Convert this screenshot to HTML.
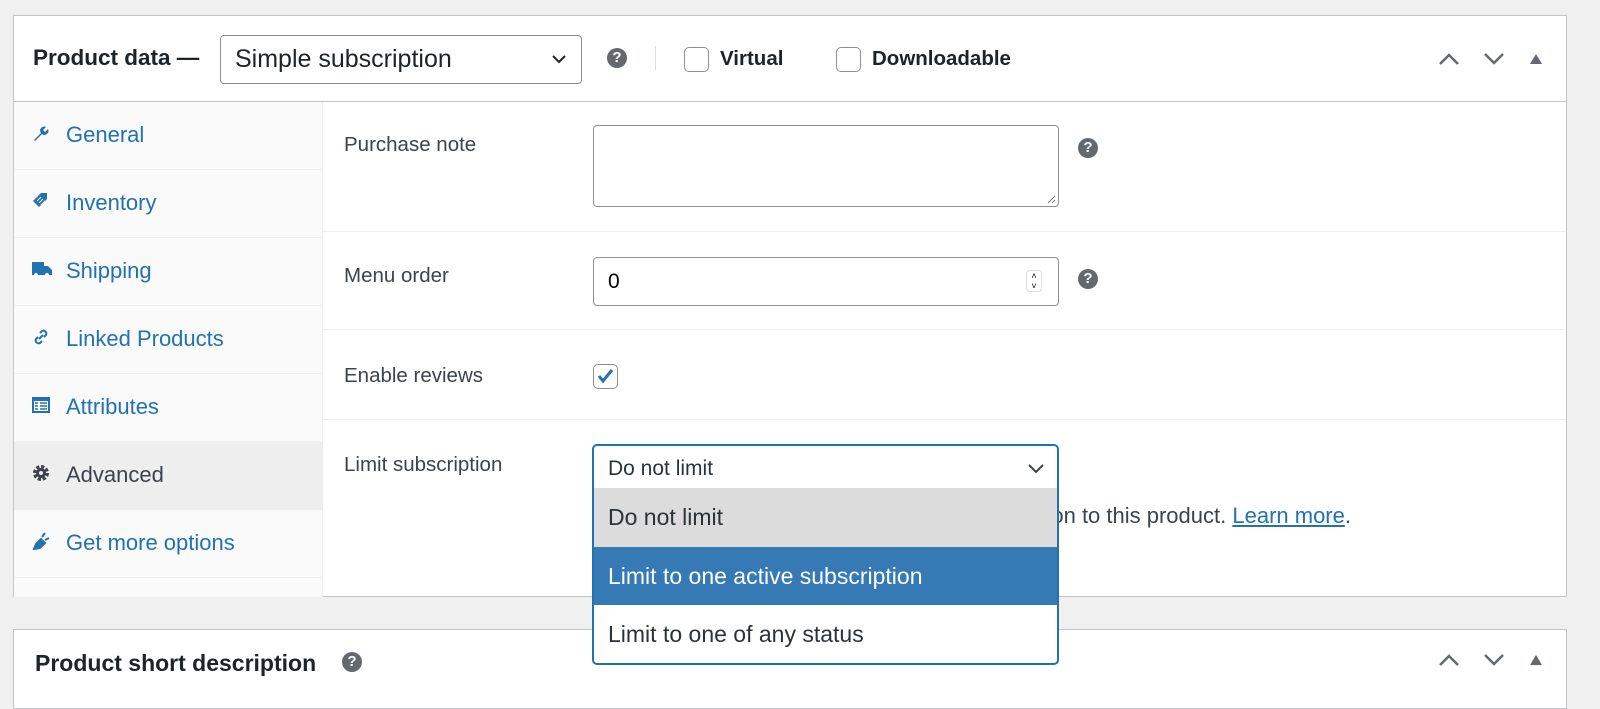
<!DOCTYPE html>
<html><head><meta charset="utf-8"><style>
*{box-sizing:border-box;margin:0;padding:0}
body{width:1600px;height:700px;background:#f0f0f1;font-family:"Liberation Sans",sans-serif;position:relative;overflow:hidden}
.a{position:absolute}
.panel{position:absolute;left:13px;width:1554px;background:#fff;border:1px solid #c3c4c7}
.tab{position:absolute;left:0;width:308px;height:68px;border-bottom:1px solid #eee;color:#2271b1;font-size:22px}
.tab span{position:absolute;left:52px;top:20px}
.tab svg{position:absolute;left:18px;top:22px}
.lbl{position:absolute;left:330px;font-size:20.5px;color:#3c434a}
.row{position:absolute;left:309px;right:0;border-bottom:1px solid #eee}
.help{position:absolute;width:20px;height:20px;border-radius:50%;background:#646970;color:#fff;font-size:15px;font-weight:bold;text-align:center;line-height:20px}
.cb{position:absolute;width:25px;height:25px;border:1.5px solid #8c8f94;border-radius:5px;background:#fff}
</style></head><body>
<div class="panel" style="top:15px;height:582px">
  <div class="a" style="left:0;right:0;top:0;height:86px;border-bottom:1px solid #c3c4c7"></div>
  <div class="a" style="left:19px;top:29px;font-size:22.5px;font-weight:bold;color:#1d2327">Product data —</div>
  <div class="a" style="left:206px;top:19px;width:362px;height:49px;border:1.5px solid #8c8f94;border-radius:4px;font-size:25px;color:#1d2327;padding:9px 0 0 14px">Simple subscription
    <svg class="a" style="right:14px;top:17px" width="16" height="12" viewBox="0 0 16 12"><path d="M2 3l6 6 6-6" fill="none" stroke="#1d2327" stroke-width="2"/></svg></div>
  <div class="help" style="left:593px;top:32px">?</div>
  <div class="a" style="left:641px;top:30px;width:1px;height:24px;background:#dcdcde"></div>
  <div class="cb" style="left:670px;top:31px"></div>
  <div class="a" style="left:706px;top:31px;font-size:20.5px;font-weight:bold;color:#1d2327">Virtual</div>
  <div class="cb" style="left:822px;top:31px"></div>
  <div class="a" style="left:858px;top:31px;font-size:20.5px;font-weight:bold;color:#1d2327">Downloadable</div>
  <svg class="a" style="left:1423px;top:35px" width="24" height="16" viewBox="0 0 24 16"><path d="M3 13l9-9 9 9" fill="none" stroke="#646970" stroke-width="2.5"/></svg>
  <svg class="a" style="left:1468px;top:35px" width="24" height="16" viewBox="0 0 24 16"><path d="M3 3l9 9 9-9" fill="none" stroke="#646970" stroke-width="2.5"/></svg>
  <svg class="a" style="left:1515px;top:37px" width="14" height="12" viewBox="0 0 14 12"><path d="M1 11L7 1l6 10z" fill="#646970"/></svg>

  <div class="a" style="left:0;top:86px;width:309px;height:495px;background:#fafafa;border-right:1px solid #eee"></div>
  <div class="tab" style="top:86px"><svg width="18" height="18" viewBox="0 0 18 18"><path d="M2 16l7-7a4 4 0 0 1 5-6l-3 3 2 2 3-3a4 4 0 0 1-6 5l-7 7z" fill="#2271b1"/></svg><span>General</span></div>
  <div class="tab" style="top:154px"><svg width="20" height="18" viewBox="0 0 20 18"><path d="M1 9l8-8h6v6l-8 8z" fill="#2271b1"/><path d="M5 9l4-4M7 11l4-4M9 13l4-4" stroke="#fff"/></svg><span>Inventory</span></div>
  <div class="tab" style="top:222px"><svg width="20" height="18" viewBox="0 0 20 18"><path d="M0 2h12v4h4l4 4v5H0z" fill="#2271b1"/><circle cx="4" cy="15" r="2" fill="#fff"/><circle cx="15" cy="15" r="2" fill="#fff"/></svg><span>Shipping</span></div>
  <div class="tab" style="top:290px"><svg width="18" height="18" viewBox="0 0 18 18"><path d="M7 11l4-4M8 5l2-2a3 3 0 0 1 4 4l-2 2M10 13l-2 2a3 3 0 0 1-4-4l2-2" fill="none" stroke="#2271b1" stroke-width="2"/></svg><span>Linked Products</span></div>
  <div class="tab" style="top:358px"><svg width="18" height="18" viewBox="0 0 18 18"><rect x="0" y="1" width="18" height="16" fill="#2271b1"/><rect x="2" y="5" width="14" height="10" fill="#fff"/><path d="M3 7h3M8 7h7M3 10h3M8 10h7M3 13h3M8 13h7" stroke="#2271b1" stroke-width="1.4"/></svg><span>Attributes</span></div>
  <div class="tab" style="top:426px;background:#eee;color:#3c434a"><svg width="18" height="18" viewBox="0 0 18 18"><circle cx="9" cy="9" r="6" fill="none" stroke="#3c434a" stroke-width="4" stroke-dasharray="3 1.7"/><circle cx="9" cy="9" r="5" fill="#3c434a"/><circle cx="9" cy="9" r="2" fill="#eee"/></svg><span>Advanced</span></div>
  <div class="tab" style="top:494px"><svg width="18" height="18" viewBox="0 0 18 18"><path d="M2 17l2-5 5-5 4 4-5 5zM10 5l3-4M13 8l4-2" fill="#2271b1" stroke="#2271b1" stroke-width="2"/></svg><span>Get more options</span></div>

  <div class="row" style="top:86px;height:130px"></div>
  <div class="row" style="top:216px;height:98px"></div>
  <div class="row" style="top:314px;height:90px;"></div>
  <div class="lbl" style="top:117px">Purchase note</div>
  <div class="a" style="left:579px;top:109px;width:466px;height:82px;border:1.5px solid #8c8f94;border-radius:4px"><svg class="a" style="right:2px;bottom:2px" width="10" height="10"><path d="M2 9l7-7M6 9l3-3" stroke="#777"/></svg></div>
  <div class="help" style="left:1064px;top:122px">?</div>
  <div class="lbl" style="top:248px">Menu order</div>
  <div class="a" style="left:579px;top:241px;width:466px;height:49px;border:1.5px solid #8c8f94;border-radius:4px;font-size:21px;color:#000;padding:12px 0 0 14px">0
    <div class="a" style="right:16px;top:12px;width:16px;height:22px;border:1px solid #ddd;border-radius:4px;font-size:9px;line-height:10px;text-align:center">˄<br>˅</div></div>
  <div class="help" style="left:1064px;top:253px">?</div>
  <div class="lbl" style="top:348px">Enable reviews</div>
  <div class="cb" style="left:579px;top:348px"><svg class="a" style="left:2px;top:2px" width="18" height="18"><path d="M3 9l4 5 9-11" fill="none" stroke="#2271b1" stroke-width="3"/></svg></div>
  <div class="lbl" style="top:437px">Limit subscription</div>
  <div class="a" style="right:215px;top:487px;font-size:22px;color:#3c434a;white-space:nowrap">subscription to this product. <span style="color:#2271b1;text-decoration:underline">Learn more</span>.</div>
</div>

<div class="panel" style="top:629px;height:80px">
  <div class="a" style="left:21px;top:20px;font-size:23px;font-weight:bold;color:#1d2327">Product short description</div>
  <div class="help" style="left:328px;top:22px">?</div>
  <svg class="a" style="left:1423px;top:22px" width="24" height="16" viewBox="0 0 24 16"><path d="M3 13l9-9 9 9" fill="none" stroke="#646970" stroke-width="2.5"/></svg>
  <svg class="a" style="left:1468px;top:22px" width="24" height="16" viewBox="0 0 24 16"><path d="M3 3l9 9 9-9" fill="none" stroke="#646970" stroke-width="2.5"/></svg>
  <svg class="a" style="left:1515px;top:24px" width="14" height="12" viewBox="0 0 14 12"><path d="M1 11L7 1l6 10z" fill="#646970"/></svg>
</div>

<div class="a" style="left:592px;top:444px;width:467px;height:221px;border:2px solid #2271b1;border-radius:5px;background:#fff;overflow:hidden;color:#2c3338">
  <div class="a" style="left:14px;top:11px;font-size:21px">Do not limit</div>
  <svg class="a" style="right:12px;top:17px" width="18" height="12" viewBox="0 0 18 12"><path d="M2 2l7 7 7-7" fill="none" stroke="#3c434a" stroke-width="2"/></svg>
  <div class="a" style="left:0;right:0;top:42px;height:59px;background:#dcdcdc;font-size:23px;padding:16px 0 0 14px">Do not limit</div>
  <div class="a" style="left:0;right:0;top:101px;height:58px;background:#3579b5;color:#fff;font-size:23px;padding:16px 0 0 14px">Limit to one active subscription</div>
  <div class="a" style="left:0;right:0;top:159px;height:58px;font-size:23px;padding:16px 0 0 14px">Limit to one of any status</div>
</div>
</body></html>
